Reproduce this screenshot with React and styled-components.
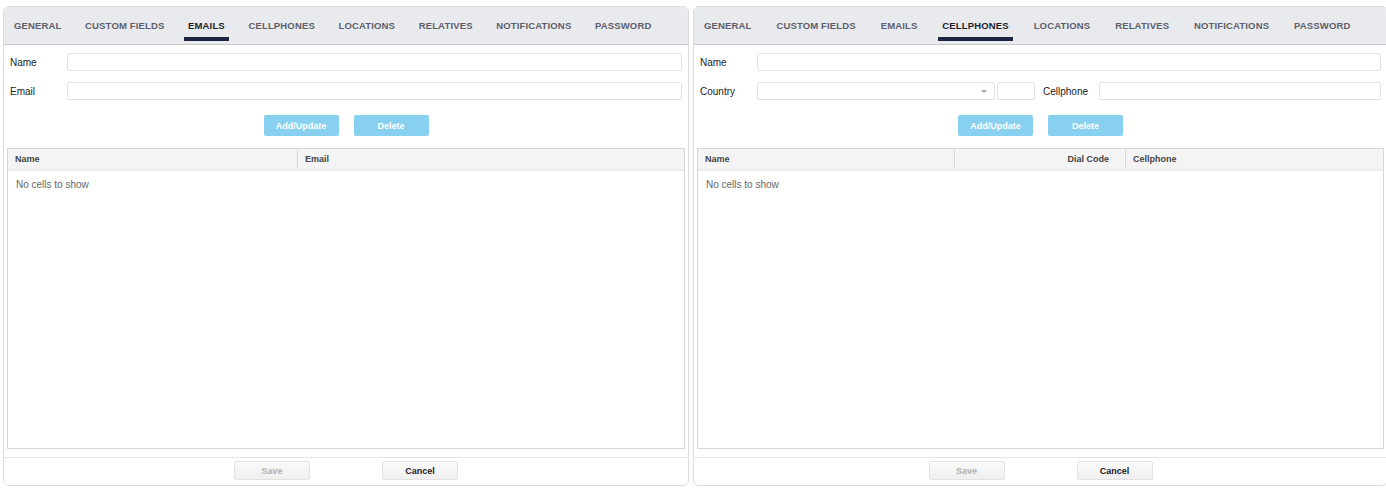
import React from "react";
import styled, { createGlobalStyle } from "styled-components";

const Global = createGlobalStyle`
  html, body { margin: 0; padding: 0; background: #fff; overflow: hidden; }
  body { font-family: "Liberation Sans", Arial, sans-serif; }
  * { box-sizing: border-box; }
`;

const Page = styled.div`
  display: flex;
  gap: 4px;
  padding: 6px 0 0 3px;
  width: 1400px;
`;

const Panel = styled.div`
  width: ${(p) => p.$w}px;
  flex: none;
  height: 480px;
  border: 1px solid #dcdcdc;
  border-radius: 6px;
  display: flex;
  flex-direction: column;
  overflow: hidden;
  background: #fff;
`;

const TabBar = styled.div`
  height: 38px;
  background: #e9eaee;
  border-bottom: 1px solid #c9cacf;
  display: flex;
  align-items: stretch;
  gap: ${(p) => p.$gap || 0}px;
  flex: none;
`;

const Tab = styled.div`
  position: relative;
  padding: 0 13.6px 0 10px;
  display: flex;
  align-items: center;
  white-space: nowrap;
  font-size: 9.5px;
  font-weight: bold;
  letter-spacing: 0.15px;
  color: ${(p) => (p.$active ? "#1b1d2b" : "#5c5f6b")};
  &::after {
    content: "";
    display: ${(p) => (p.$active ? "block" : "none")};
    position: absolute;
    left: 6px;
    right: 9.6px;
    bottom: 3px;
    height: 4px;
    background: #1d2545;
  }
`;

const Form = styled.div`
  display: flex;
  flex-direction: column;
  gap: 11px;
  padding: 8px 6px 0 6px;
`;

const Row = styled.div`
  display: flex;
  align-items: center;
  height: 18px;
`;

const Label = styled.div`
  width: ${(p) => p.$w || 57}px;
  flex: none;
  font-size: 10px;
  color: #222;
`;

const Input = styled.div`
  flex: ${(p) => (p.$w ? "none" : "1")};
  width: ${(p) => (p.$w ? `${p.$w}px` : "auto")};
  height: 18px;
  border: 1px solid #e2e2e2;
  border-radius: 2px;
  background: #fff;
  margin-right: ${(p) => p.$mr || 0}px;
`;

const Select = styled.div`
  width: ${(p) => p.$w}px;
  flex: none;
  height: 18px;
  border: 1px solid #e2e2e2;
  border-radius: 2px;
  margin-right: 2px;
  display: flex;
  align-items: center;
  justify-content: flex-end;
  padding-right: 7px;
`;

const Caret = styled.div`
  width: 0;
  height: 0;
  border-left: 3.5px solid transparent;
  border-right: 3.5px solid transparent;
  border-top: 3.5px solid #aaa;
`;

const Actions = styled.div`
  display: flex;
  justify-content: center;
  gap: 15px;
  margin-top: 15px;
`;

const BlueButton = styled.div`
  width: 75px;
  height: 21px;
  border-radius: 2px;
  background: #87d0ef;
  color: #fff;
  font-size: 9px;
  font-weight: bold;
  display: flex;
  align-items: center;
  justify-content: center;
`;

const Table = styled.div`
  flex: 1;
  margin: 12px 3px 0 3px;
  border: 1px solid #d6d6d6;
  display: flex;
  flex-direction: column;
`;

const THead = styled.div`
  display: flex;
  height: 22px;
  background: #f4f4f4;
  border-bottom: 2px solid #ececec;
`;

const TH = styled.div`
  flex: ${(p) => (p.$w ? "none" : "1")};
  width: ${(p) => (p.$w ? `${p.$w}px` : "auto")};
  border-right: ${(p) => (p.$last ? "none" : "1px solid #d8d8d8")};
  padding: 0 ${(p) => (p.$right ? "16px" : "0")} 0 7px;
  display: flex;
  align-items: center;
  justify-content: ${(p) => (p.$right ? "flex-end" : "flex-start")};
  font-size: 9px;
  font-weight: bold;
  color: #444;
`;

const Empty = styled.div`
  padding: 8px 8px;
  font-size: 10px;
  color: #666;
`;

const Footer = styled.div`
  flex: none;
  margin-top: 8px;
  border-top: 1px solid #e4e4e4;
  height: 28px;
  display: flex;
  justify-content: center;
  align-items: flex-start;
  padding-top: 3px;
  gap: 72px;
`;

const GreyButton = styled.div`
  width: 76px;
  height: 19px;
  border: 1px solid #e2e2e2;
  border-radius: 2px;
  background: linear-gradient(#fafafa, #efefef);
  font-size: 9px;
  font-weight: bold;
  color: ${(p) => (p.$disabled ? "#b0b0b0" : "#222")};
  display: flex;
  align-items: center;
  justify-content: center;
`;

const TABS = [
  "GENERAL",
  "CUSTOM FIELDS",
  "EMAILS",
  "CELLPHONES",
  "LOCATIONS",
  "RELATIVES",
  "NOTIFICATIONS",
  "PASSWORD",
];

function Tabs({ active, gap }) {
  return (
    <TabBar $gap={gap}>
      {TABS.map((t) => (
        <Tab key={t} $active={t === active}>
          {t}
        </Tab>
      ))}
    </TabBar>
  );
}

function Bottom() {
  return (
    <Footer>
      <GreyButton $disabled>Save</GreyButton>
      <GreyButton>Cancel</GreyButton>
    </Footer>
  );
}

export default function App() {
  return (
    <>
      <Global />
      <Page>
        <Panel $w={686}>
          <Tabs active="EMAILS" />
          <Form>
            <Row>
              <Label>Name</Label>
              <Input />
            </Row>
            <Row>
              <Label>Email</Label>
              <Input />
            </Row>
          </Form>
          <Actions>
            <BlueButton>Add/Update</BlueButton>
            <BlueButton>Delete</BlueButton>
          </Actions>
          <Table>
            <THead>
              <TH $w={290}>Name</TH>
              <TH $last>Email</TH>
            </THead>
            <Empty>No cells to show</Empty>
          </Table>
          <Bottom />
        </Panel>
        <Panel $w={695}>
          <Tabs active="CELLPHONES" gap={1.3} />
          <Form>
            <Row>
              <Label>Name</Label>
              <Input />
            </Row>
            <Row>
              <Label>Country</Label>
              <Select $w={238}>
                <Caret />
              </Select>
              <Input $w={38} $mr={8} />
              <Label $w={56}>Cellphone</Label>
              <Input />
            </Row>
          </Form>
          <Actions>
            <BlueButton>Add/Update</BlueButton>
            <BlueButton>Delete</BlueButton>
          </Actions>
          <Table>
            <THead>
              <TH $w={257}>Name</TH>
              <TH $w={171} $right>Dial Code</TH>
              <TH $last>Cellphone</TH>
            </THead>
            <Empty>No cells to show</Empty>
          </Table>
          <Bottom />
        </Panel>
      </Page>
    </>
  );
}
